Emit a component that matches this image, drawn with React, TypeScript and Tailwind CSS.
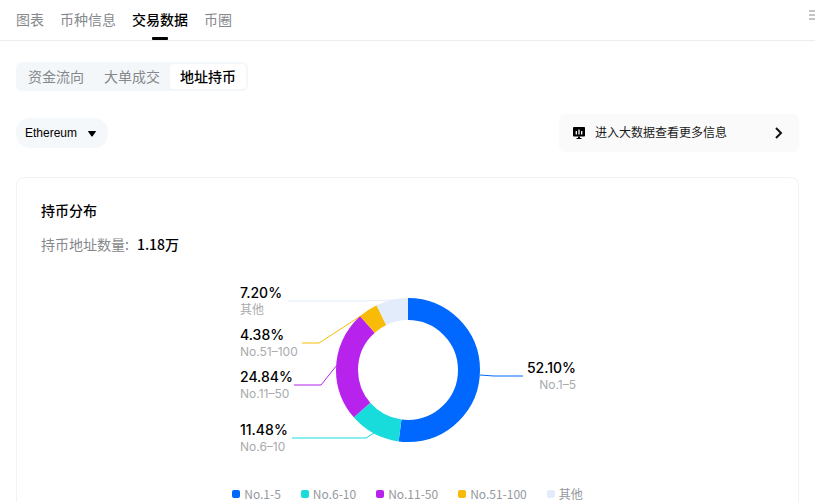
import React, { useState } from "react";

const navTabs = ["图表", "币种信息", "交易数据", "币圈"];
const dataTabs = ["资金流向", "大单成交", "地址持币"];

const holders = [
  { name: "No.1-5", value: 52.1, color: "#0068ff" },
  { name: "No.6-10", value: 11.48, color: "#18dcdc" },
  { name: "No.11-50", value: 24.84, color: "#b722ec" },
  { name: "No.51-100", value: 4.38, color: "#f8bb07" },
  { name: "其他", value: 7.2, color: "#e3ecfb" },
];

const callouts = [
  { name: "其他", x: 12, y: 24, anchor: "start", line: "60,27 135,27 165,26" },
  { name: "No.51-100", x: 12, y: 66, anchor: "start", line: "74,69 91,69 139,38" },
  { name: "No.11-50", x: 12, y: 108, anchor: "start", line: "66,111 93,111 109,91" },
  { name: "No.6-10", x: 12, y: 161, anchor: "start", line: "64,164 138,164 146,159" },
  { name: "No.1-5", x: 348, y: 99, anchor: "end", line: "252,101 266,102 295,102" },
] as const;

function HoldersChart() {
  let total = 0;
  const slices = holders.map((holder) => {
    const start = total;
    total += holder.value;
    return { ...holder, start };
  });

  return (
    <svg
      width="360"
      height="192"
      viewBox="0 0 360 192"
      className="max-w-full"
      role="img"
      aria-label="持币分布"
    >
      {callouts.map((callout) => {
        const holder = holders.find((h) => h.name === callout.name)!;
        return (
          <g key={callout.name} textAnchor={callout.anchor}>
            <polyline points={callout.line} fill="none" stroke={holder.color} />
            <text
              x={callout.x}
              y={callout.y}
              className="fill-black font-['Inter','Noto_Sans_CJK_SC',sans-serif] text-[14px] font-medium"
            >
              {holder.value.toFixed(2)}%
            </text>
            <text
              x={callout.x}
              y={callout.y + 16}
              className="fill-[#a9abae] font-['Inter','Noto_Sans_CJK_SC',sans-serif] text-[12px]"
            >
              {callout.name.replace("-", "–")}
            </text>
          </g>
        );
      })}
      <g transform="rotate(-90 180 96)">
        {slices.map((slice) => (
          <circle
            key={slice.name}
            cx="180"
            cy="96"
            r="61"
            fill="none"
            stroke={slice.color}
            strokeWidth="22"
            pathLength="100"
            strokeDasharray={`${slice.value} ${100 - slice.value}`}
            strokeDashoffset={-slice.start}
          />
        ))}
      </g>
    </svg>
  );
}

function App() {
  const [activeNav, setActiveNav] = useState("交易数据");
  const [activeData, setActiveData] = useState("地址持币");

  return (
    <div className="h-screen overflow-hidden bg-white font-['Noto_Sans_CJK_SC',sans-serif] text-black">
      {/* Top navigation */}
      <header className="flex h-[41px] items-stretch justify-between border-b border-[#ececee] pl-4">
        <nav className="flex gap-4">
          {navTabs.map((tab) => (
            <button
              key={tab}
              onClick={() => setActiveNav(tab)}
              className={
                activeNav === tab
                  ? "relative pb-0.5 text-sm font-medium text-black"
                  : "relative pb-0.5 text-sm text-[#85888c]"
              }
            >
              {tab}
              {activeNav === tab && (
                <span className="absolute bottom-0 left-1/2 h-[3px] w-4 -translate-x-1/2 rounded-[1px] bg-black" />
              )}
            </button>
          ))}
        </nav>
        <button aria-label="菜单" className="-mr-1.5 shrink-0 pb-2.5">
          <svg width="12" height="12" viewBox="0 0 12 12" stroke="#c4c4c4" strokeWidth="2">
            <path d="M0 2h12M0 6h12M0 10h12" />
          </svg>
        </button>
      </header>

      <main className="px-4 pt-[21px]">
        {/* Data type switch */}
        <div className="inline-flex rounded-md bg-[#f4f7f9] p-0.5 align-top">
          {dataTabs.map((tab) => (
            <button
              key={tab}
              onClick={() => setActiveData(tab)}
              className={
                activeData === tab
                  ? "h-[25px] rounded-[4px] bg-white px-2.5 pb-0.5 text-sm font-medium text-black"
                  : "h-[25px] px-2.5 pb-0.5 text-sm text-[#85888c]"
              }
            >
              {tab}
            </button>
          ))}
        </div>

        <div className="mt-[23px] flex items-center justify-between">
          <div className="relative">
            <select
              aria-label="网络"
              className="h-[30px] w-[92px] appearance-none rounded-[14px] bg-[#f5f8fa] pl-[9px] font-['Liberation_Sans',sans-serif] text-xs text-black"
            >
              <option>Ethereum</option>
            </select>
            <svg
              width="8"
              height="6"
              viewBox="0 0 8 6"
              className="pointer-events-none absolute top-[13px] right-3"
            >
              <path d="M0.6 0h6.8q.8 0 .4.7L4.6 5.2q-.6.8-1.2 0L.2.7Q-.2 0 .6 0z" />
            </svg>
          </div>
          <a
            href="#"
            className="flex h-[38px] w-60 items-center rounded-md bg-[#fafafa] pr-4 pl-3.5 text-xs text-[#1a1a1a]"
          >
            <svg width="12" height="12" viewBox="0 0 12 12">
              <path d="M.8 0h10.4q.8 0 .8.8v8q0 .8-.8.8H.8q-.8 0-.8-.8v-8Q0 0 .8 0z" />
              <path d="M5 9.5h2V11h1.500v1h-5v-1H5z" />
              <path d="M3.300 4v3.500M6 2.500v5M8.700 4v3.500" stroke="#fff" strokeWidth="1.3" />
            </svg>
            <span className="ml-2.5 flex-1 pb-0.5">进入大数据查看更多信息</span>
            <svg width="8" height="12" viewBox="0 0 8 12" fill="none" stroke="#111" strokeWidth="2">
              <path d="M1 1L6 6L1 11" />
            </svg>
          </a>
        </div>

        {/* Holder distribution */}
        <section className="mt-[25px] rounded-lg border border-[#f2f3f4] px-6 pt-[22px] pb-6">
          <h2 className="text-sm font-medium">持币分布</h2>
          <p className="mt-3.5 flex gap-2 text-sm">
            <span className="text-[#85888c]">持币地址数量:</span>
            <span className="font-medium">1.18万</span>
          </p>
          <div className="mt-5 flex justify-center">
            <HoldersChart />
          </div>
          <ul className="mt-5 flex justify-center gap-5 text-xs text-[#94989d]">
            {holders.map((holder) => (
              <li key={holder.name} className="flex items-center gap-1">
                <span
                  className="size-2 rounded-[2px]"
                  style={{ backgroundColor: holder.color }}
                />
                {holder.name}
              </li>
            ))}
          </ul>
        </section>
      </main>
    </div>
  );
}

export default App;
